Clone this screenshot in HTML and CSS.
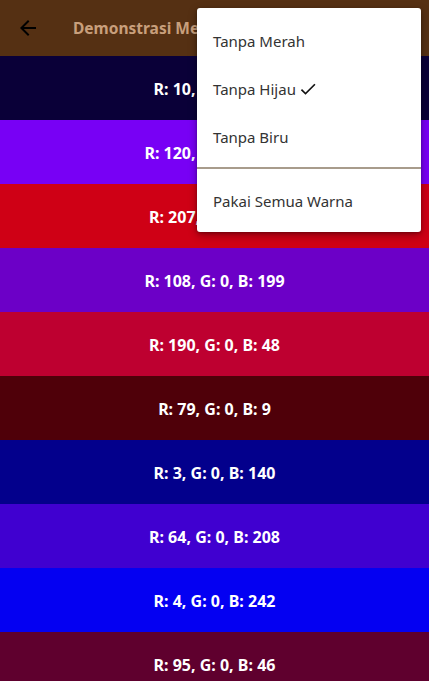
FILE: index.html
```html
<!DOCTYPE html>
<html>
<head>
<meta charset="utf-8">
<link rel="stylesheet" href="styles.css">
</head>
<body>
<div class="app">
  <header class="appbar">
    <button class="back" aria-label="Kembali">
      <svg width="24" height="24" viewBox="0 0 24 24"><path d="M20 11H7.83l5.59-5.59L12 4l-8 8 8 8 1.41-1.41L7.83 13H20v-2z" fill="#000"/></svg>
    </button>
    <h1 class="title">Demonstrasi Menu Popup</h1>
  </header>
  <main class="list">
    <div class="row" style="background:rgb(10,0,56)">R: 10, G: 0, B: 56</div>
    <div class="row" style="background:rgb(120,0,245)">R: 120, G: 0, B: 245</div>
    <div class="row" style="background:rgb(207,0,21)">R: 207, G: 0, B: 21</div>
    <div class="row" style="background:rgb(108,0,199)">R: 108, G: 0, B: 199</div>
    <div class="row" style="background:rgb(190,0,48)">R: 190, G: 0, B: 48</div>
    <div class="row" style="background:rgb(79,0,9)">R: 79, G: 0, B: 9</div>
    <div class="row" style="background:rgb(3,0,140)">R: 3, G: 0, B: 140</div>
    <div class="row" style="background:rgb(64,0,208)">R: 64, G: 0, B: 208</div>
    <div class="row" style="background:rgb(4,0,242)">R: 4, G: 0, B: 242</div>
    <div class="row" style="background:rgb(95,0,46)">R: 95, G: 0, B: 46</div>
  </main>
  <div class="menu">
    <div class="item">Tanpa Merah</div>
    <div class="item">Tanpa Hijau
      <svg class="check" width="20" height="20" viewBox="0 0 24 24"><path d="M9 16.17L4.83 12l-1.42 1.41L9 19 21 7l-1.41-1.41z" fill="#111"/></svg>
    </div>
    <div class="item">Tanpa Biru</div>
    <div class="divider"></div>
    <div class="item">Pakai Semua Warna</div>
  </div>
</div>
</body>
</html>
```
FILE: styles.css
```css
* { box-sizing: border-box; }
html, body { margin: 0; padding: 0; }
body {
  font-family: "Noto Sans", "Open Sans", sans-serif;
  width: 429px;
  height: 681px;
  overflow: hidden;
}
.app { position: relative; width: 429px; height: 681px; overflow: hidden; }
.appbar {
  height: 56px;
  background: #553013;
  display: flex;
  align-items: center;
  padding-left: 16px;
}
.back {
  width: 24px; height: 24px;
  padding: 0; border: 0; background: none;
  display: flex; align-items: center; justify-content: center;
}
.title {
  margin: 0 0 0 33px;
  font-size: 15.5px;
  font-weight: 700;
  color: #c89f7c;
  white-space: nowrap;
}
.list { display: flex; flex-direction: column; }
.row {
  height: 64px;
  flex: none;
  display: flex;
  align-items: center;
  justify-content: center;
  color: #fff;
  font-weight: 700;
  font-size: 16px;
  padding-top: 2px;
}
.menu {
  position: absolute;
  left: 197px;
  top: 8px;
  width: 224px;
  background: #fff;
  border-radius: 3px;
  padding: 8px 0;
  box-shadow: 0 3px 8px rgba(0,0,0,0.35), 0 1px 3px rgba(0,0,0,0.25);
}
.item {
  height: 48px;
  display: flex;
  align-items: center;
  padding: 2px 16px 0;
  font-size: 15px;
  color: #333;
}
.check { margin-left: 2px; }
.divider {
  height: 16px;
  position: relative;
}
.divider::after {
  content: "";
  position: absolute;
  left: 0; right: 0; top: 7px;
  height: 2px;
  background: #a89c8c;
}
```
